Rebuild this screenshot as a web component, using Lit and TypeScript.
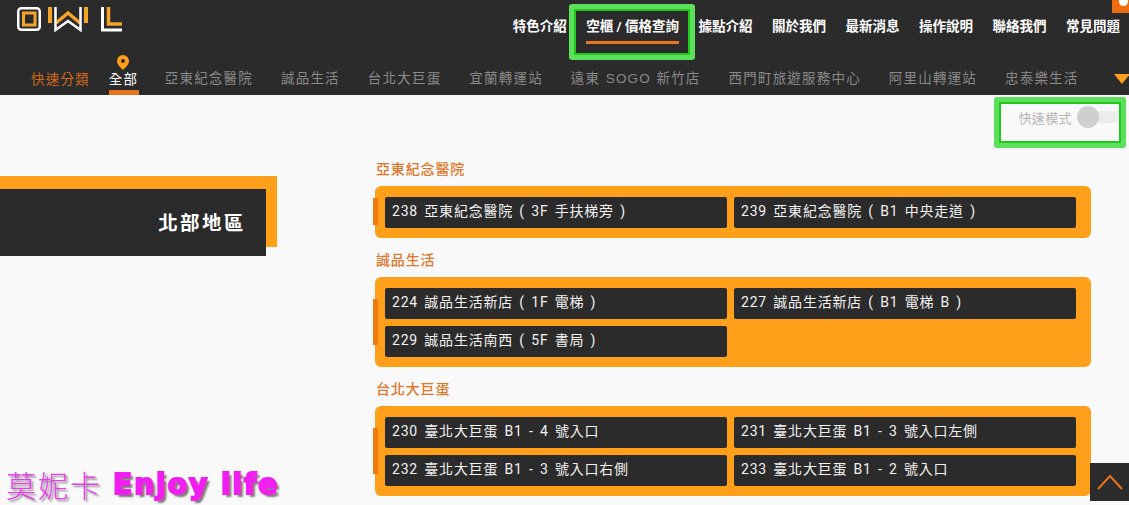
import { LitElement, html, css } from "lit";
import { customElement } from "lit/decorators.js";

const topNav = ["特色介紹", "空櫃 / 價格查詢", "據點介紹", "關於我們", "最新消息", "操作說明", "聯絡我們", "常見問題"];
const subNav = ["亞東紀念醫院", "誠品生活", "台北大巨蛋", "宜蘭轉運站", "遠東 SOGO 新竹店", "西門町旅遊服務中心", "阿里山轉運站", "忠泰樂生活"];
const groups = [
  { title: "亞東紀念醫院", items: ["238 亞東紀念醫院 ( 3F 手扶梯旁 )", "239 亞東紀念醫院 ( B1 中央走道 )"] },
  { title: "誠品生活", items: ["224 誠品生活新店 ( 1F 電梯 )", "227 誠品生活新店 ( B1 電梯 B )", "229 誠品生活南西 ( 5F 書局 )"] },
  { title: "台北大巨蛋", items: ["230 臺北大巨蛋 B1 - 4 號入口", "231 臺北大巨蛋 B1 - 3 號入口左側", "232 臺北大巨蛋 B1 - 3 號入口右側", "233 臺北大巨蛋 B1 - 2 號入口"] },
];

@customElement("app-root")
export class AppRoot extends LitElement {
  static styles = css`
    :host { display: block; width: 1129px; height: 505px; overflow: hidden; position: relative; background: #f9f9f9;
      font-family: "Roboto", "Liberation Sans", "Noto Sans CJK TC", sans-serif; }
    header { background: #2b2b2b; height: 95px; display: flex; flex-direction: column; }
    .row1 { height: 53px; display: flex; align-items: flex-start; }
    .logo { margin: 6px 0 0 16px; flex: none; display: block; }
    .topnav { margin-left: auto; display: flex; padding: 17px 9px 0 0; }
    .topnav a { color: #fff; font-size: 13.5px; font-weight: 700; line-height: 18px; white-space: nowrap; margin-left: 19.5px; }
    .topnav a.active { position: relative; }
    .topnav a.active::after { content: ""; position: absolute; left: 0; right: 0; top: 24px; height: 3px; background: #e8741e; }
    .row2 { flex: 1; display: flex; align-items: flex-start; padding-left: 31px; }
    .quick { color: #d2691e; font-size: 13.5px; letter-spacing: 1.2px; line-height: 18px; margin-top: 17px; white-space: nowrap; }
    .all { margin-left: 19px; width: 30px; height: 42px; position: relative; }
    .all span { position: absolute; left: 0; top: 17px; color: #fff; font-size: 13.5px; letter-spacing: 1.2px; line-height: 18px; white-space: nowrap; }
    .all i { position: absolute; left: 0; right: 0; bottom: 0; height: 5px; background: #e8741e; }
    .all svg { position: absolute; left: 8px; top: 2px; }
    .sub { display: flex; margin-left: 26px; margin-top: 17px; }
    .sub a { font-family: "Liberation Sans", "Noto Sans CJK TC", sans-serif; color: #8a8a8a; font-size: 13.5px; letter-spacing: 1.2px; word-spacing: 0.5px; line-height: 18px; white-space: nowrap; margin-right: 28px; }
    .tri { position: absolute; left: 1114px; top: 74px; width: 0; height: 0; border-left: 8px solid transparent; border-right: 8px solid transparent; border-top: 10px solid #ff9f1a; }
    .corner { position: absolute; left: 1112px; top: 0; width: 17px; height: 13px; background: #ee6c10; overflow: hidden; }
    .corner::after { content: ""; position: absolute; left: 7px; top: -3px; width: 9px; height: 9px; border-radius: 50%; background: #fff; }
    .toolbar { height: 65px; box-sizing: border-box; display: flex; justify-content: flex-end; align-items: center; padding: 0 10px 21px 0; }
    .tlabel { color: #b5b5b5; font-size: 13px; letter-spacing: 0.4px; margin-right: 5px; }
    .switch { width: 42px; height: 12px; background: #ececec; border-radius: 6px; position: relative; }
    .switch::before { content: ""; position: absolute; left: 0; top: -5px; width: 22px; height: 22px; border-radius: 50%; background: #cfcfcf; }
    main { display: grid; grid-template-columns: 375px 716px; }
    .region { margin-top: 16px; height: 80px; position: relative; }
    .region::before { content: ""; position: absolute; left: 0; top: 0; width: 277px; height: 71px; background: #ff9f1a; }
    .region div { position: absolute; left: 0; top: 13px; width: 266px; height: 67px; box-sizing: border-box; background: #2b2b2b; color: #fff;
      font-size: 19.5px; font-weight: 700; letter-spacing: 2.3px; display: flex; align-items: center; justify-content: flex-end; padding-right: 20.5px; padding-bottom: 2px; }
    .group h3 { margin: 0; color: #e0762a; font-size: 14px; font-weight: 500; letter-spacing: 0.85px; line-height: 19px; height: 26px; padding-left: 1px; box-sizing: border-box; }
    .box { background: #ff9f1a; border-radius: 6px; padding: 11px 15px 10px 10px; margin: 0 0 13px; display: grid; grid-template-columns: 342px 342px; column-gap: 7px; row-gap: 7px; position: relative; }
    .box::before { content: ""; position: absolute; left: -2px; top: 12px; width: 5px; height: 27px; background: #f07a10; }
    .box.tall::before { height: 46px; top: 22px; }
    .cell { background: #2b2b2b; border-radius: 2px; height: 31px; color: #f2f2f2; font-size: 14px; letter-spacing: 0.8px; word-spacing: 2px; line-height: 29px; padding-left: 7px; white-space: nowrap; overflow: hidden; }
    .wm { position: absolute; left: 6px; top: 465px; display: flex; align-items: center; gap: 11px; white-space: nowrap; pointer-events: none; }
    .wm b { font-family: "Noto Sans CJK TC", serif; font-weight: 300; font-size: 30px; letter-spacing: 2px; color: #e83ee8; line-height: 36px; text-shadow: 2px 2px 2px #8a8a8a; }
    .wm em { font-family: "DejaVu Sans", sans-serif; font-style: normal; font-weight: 700; font-size: 28px; line-height: 36px; margin-top: 2px; color: #f01ef0; letter-spacing: 2px; text-shadow: 3px 3px 2px #777; -webkit-text-stroke: 2px #f01ef0; }
    .up { position: absolute; left: 1090px; top: 463px; width: 39px; height: 38px; background: #2b2b2b; display: flex; align-items: center; justify-content: center; }
    .mark { position: absolute; box-sizing: border-box; border: 5px solid #5ce05c; border-radius: 3px; box-shadow: inset 0 0 0 2px #20c820; pointer-events: none; }
    .m1 { left: 569px; top: 4px; width: 126px; height: 56px; }
    .m2 { left: 994px; top: 97px; width: 132px; height: 51px; }
  `;

  render() {
    return html`
      <header>
        <div class="row1">
          <svg class="logo" width="108" height="26" viewBox="0 0 108 26" fill="none">
            <rect x="2.250" y="2.250" width="21.500" height="21.500" rx="3" stroke="#fff" stroke-width="2.500"/>
            <rect x="7.500" y="7" width="11.500" height="12" stroke="#f5a42a" stroke-width="3"/>
            <path d="M34 1V17" stroke="#f5a42a" stroke-width="4"/>
            <path d="M70 1V17" stroke="#f5a42a" stroke-width="4"/>
            <path d="M40 17L52 7L64 17" stroke="#f5a42a" stroke-width="3.500"/>
            <path d="M39.500 1V24L52 15L64.500 24V1" stroke="#fff" stroke-width="2.500"/>
            <path d="M86.500 1V24H106" stroke="#fff" stroke-width="3"/>
            <path d="M92.500 1V18H106" stroke="#f5a42a" stroke-width="3.500"/>
          </svg>
          <nav class="topnav">${topNav.map((t, i) => html`<a class=${i === 1 ? "active" : ""}>${t}</a>`)}</nav>
        </div>
        <div class="row2">
          <span class="quick">快速分類</span>
          <div class="all">
            <svg width="12" height="15" viewBox="0 0 12 15"><path fill-rule="evenodd" d="M6 0a6 6 0 0 1 6 6c0 3.500-3.500 6.500-6 9-2.500-2.500-6-5.500-6-9a6 6 0 0 1 6-6zm0 4a2 2 0 1 0 0 4 2 2 0 0 0 0-4z" fill="#ff9f1a"/></svg>
            <span>全部</span><i></i>
          </div>
          <nav class="sub">${subNav.map((t) => html`<a>${t}</a>`)}</nav>
        </div>
      </header>
      <div class="tri"></div>
      <div class="corner"></div>
      <div class="toolbar"><span class="tlabel">快速模式</span><div class="switch"></div></div>
      <main>
        <div><div class="region"><div>北部地區</div></div></div>
        <div>
          ${groups.map((g) => html`
            <section class="group">
              <h3>${g.title}</h3>
              <div class="box ${g.items.length > 2 ? "tall" : ""}">
                ${g.items.map((c) => html`<div class="cell">${c}</div>`)}
              </div>
            </section>`)}
        </div>
      </main>
      <div class="wm"><b>莫妮卡</b><em>Enjoy life</em></div>
      <div class="up"><svg width="26" height="16" viewBox="0 0 26 16" fill="none"><path d="M1 15L13 2l12 13" stroke="#e8741e" stroke-width="2"/></svg></div>
      <div class="mark m1"></div>
      <div class="mark m2"></div>
    `;
  }
}
